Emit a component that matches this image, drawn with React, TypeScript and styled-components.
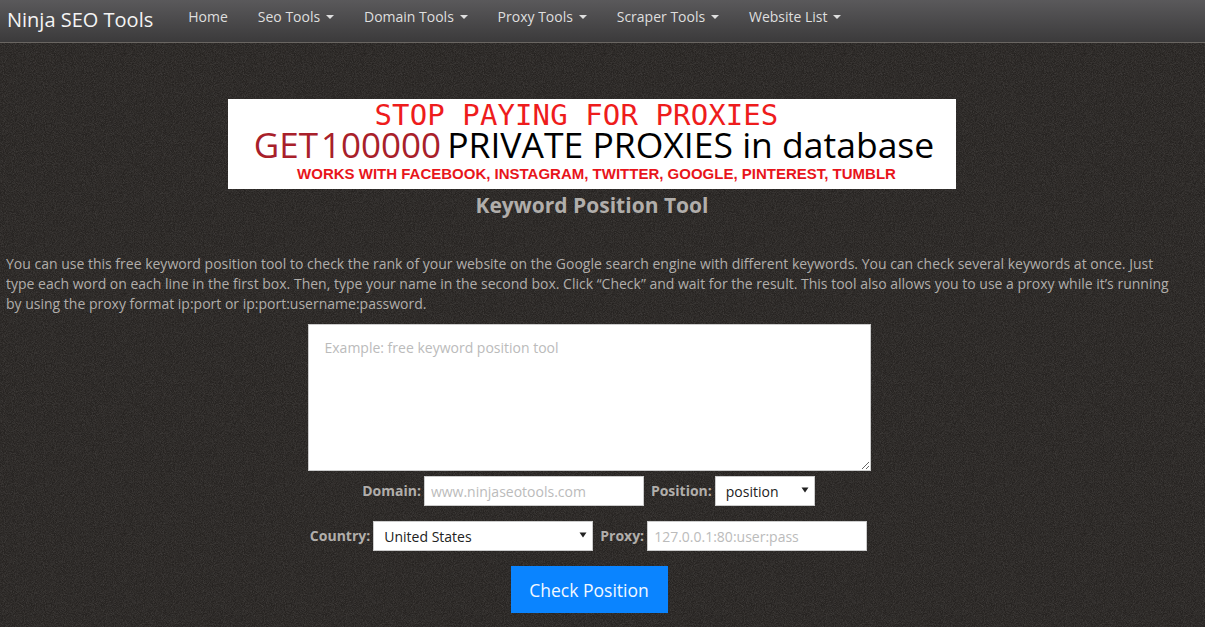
import React from 'react';
import styled, { createGlobalStyle } from 'styled-components';

const noise = `url("data:image/svg+xml,%3Csvg xmlns='http://www.w3.org/2000/svg' width='240' height='240'%3E%3Cfilter id='n'%3E%3CfeTurbulence type='fractalNoise' baseFrequency='1.1' numOctaves='2' stitchTiles='stitch'/%3E%3CfeColorMatrix values='0 0 0 0 0.5 0 0 0 0 0.48 0 0 0 0 0.46 0 0 0 0.3 -0.09'/%3E%3C/filter%3E%3Crect width='240' height='240' filter='url(%23n)'/%3E%3C/svg%3E")`;

const arrow = `url("data:image/svg+xml,%3Csvg xmlns='http://www.w3.org/2000/svg' width='8' height='6'%3E%3Cpath d='M0.5 0.5h7L4 5.5z' fill='%23222'/%3E%3C/svg%3E")`;

const GlobalStyle = createGlobalStyle`
  html, body {
    margin: 0;
    padding: 0;
    height: 100%;
    overflow: hidden;
  }
  body {
    font-family: "Open Sans", "Liberation Sans", sans-serif;
    font-size: 14px;
    line-height: 20px;
    color: #b4b1ae;
    background-color: #262321;
    background-image: ${noise};
  }
  * { box-sizing: border-box; }
`;

const NavBar = styled.nav`
  display: flex;
  align-items: center;
  height: 43px;
  background: linear-gradient(to bottom, #5a595b 0%, #3b3a3b 100%);
  border-bottom: 1px solid #6a6662;
`;

const Brand = styled.a`
  font-size: 20px;
  color: #f4f4f4;
  margin-left: 7px;
  margin-right: 20px;
  position: relative;
  top: -1px;
  white-space: nowrap;
`;

const NavItem = styled.a`
  display: flex;
  align-items: center;
  gap: 5.8px;
  padding: 0 15px;
  font-size: 14px;
  color: #dfdfdf;
  position: relative;
  top: -4px;
  white-space: nowrap;
`;

const Caret = styled.span`
  display: inline-block;
  width: 0;
  height: 0;
  border-left: 4px solid transparent;
  border-right: 4px solid transparent;
  border-top: 4px solid #dfdfdf;
`;

const Page = styled.main`
  display: flex;
  flex-direction: column;
  align-items: center;
  width: 1184px;
  padding: 56px 6px 0;
`;

const Banner = styled.div`
  display: flex;
  flex-direction: column;
  align-items: center;
  flex-shrink: 0;
  width: 728px;
  height: 90px;
  padding-top: 3px;
  background: #fff;
`;

const BannerTop = styled.div`
  font-family: "DejaVu Sans Mono", "Liberation Mono", monospace;
  font-size: 29px;
  line-height: 27px;
  letter-spacing: 0.1px;
  color: #ee1c1c;
  white-space: nowrap;
  margin-right: 31px;
`;

const BannerMiddle = styled.div`
  display: flex;
  font-size: 35.5px;
  line-height: 31px;
  color: #000;
  white-space: nowrap;
  margin-left: 4px;
`;

const BannerRed = styled.span`
  color: #a8202a;
  font-size: 35px;
  margin-right: 6px;
  word-spacing: -6px;
`;

const BannerBottom = styled.div`
  font-family: "Liberation Sans", sans-serif;
  font-weight: 700;
  font-size: 15px;
  line-height: 20px;
  margin-top: 4px;
  margin-left: 9px;
  color: #e8151b;
  white-space: nowrap;
`;

const Title = styled.h1`
  margin: 0;
  font-size: 21px;
  line-height: 33px;
  font-weight: 700;
  color: #b1aeab;
`;

const Intro = styled.p`
  align-self: stretch;
  margin: 32px 0 0;
  font-size: 14px;
  line-height: 20px;
  color: #b1aeab;
`;

const KeywordBox = styled.textarea`
  display: block;
  width: 563px;
  height: 147px;
  margin-top: 10px;
  margin-right: 6px;
  padding: 13px 16px;
  border: 1px solid #ccc;
  background: #fff;
  font-family: inherit;
  font-size: 14px;
  line-height: 20px;
  outline: none;
  resize: both;
  &::placeholder { color: #bbb; opacity: 1; }
`;

const FormRow = styled.div<{ $top: number }>`
  display: flex;
  align-items: center;
  justify-content: center;
  gap: 3px;
  height: 30px;
  margin-top: ${(p) => p.$top}px;
  margin-right: 11px;
`;

const FieldLabel = styled.label`
  font-weight: 700;
  font-size: 14px;
  color: #b1aeab;
  margin-left: 4px;
`;

const TextField = styled.input<{ $width: number }>`
  width: ${(p) => p.$width}px;
  height: 30px;
  padding: 0 6px;
  border: 1px solid #ccc;
  border-radius: 0;
  background: #fff;
  font-family: inherit;
  font-size: 14px;
  outline: none;
  &::placeholder { color: #bbb; opacity: 1; }
`;

const SelectField = styled.select<{ $width: number }>`
  width: ${(p) => p.$width}px;
  height: 30px;
  padding: 0 10px;
  border: 1px solid #ccc;
  border-radius: 0;
  background: #fff ${arrow} no-repeat right 5px top 10px;
  appearance: none;
  font-family: inherit;
  font-size: 14px;
  color: #222;
  outline: none;
`;

const SubmitButton = styled.button`
  margin-top: 15px;
  margin-right: 6px;
  width: 157px;
  height: 47px;
  border: none;
  border-radius: 0;
  background: #0a84ff;
  color: #f2f8ff;
  font-family: inherit;
  font-size: 17.5px;
`;

const menu = ['Seo Tools', 'Domain Tools', 'Proxy Tools', 'Scraper Tools', 'Website List'];

const App: React.FC = () => (
  <>
    <GlobalStyle />
    <NavBar>
      <Brand>Ninja SEO Tools</Brand>
      <NavItem>Home</NavItem>
      {menu.map((label) => (
        <NavItem key={label}>
          {label}
          <Caret />
        </NavItem>
      ))}
    </NavBar>
    <Page>
      <Banner>
        <BannerTop>STOP PAYING FOR PROXIES</BannerTop>
        <BannerMiddle>
          <BannerRed>GET 100000</BannerRed>PRIVATE PROXIES in database
        </BannerMiddle>
        <BannerBottom>WORKS WITH FACEBOOK, INSTAGRAM, TWITTER, GOOGLE, PINTEREST, TUMBLR</BannerBottom>
      </Banner>
      <Title>Keyword Position Tool</Title>
      <Intro>
        You can use this free keyword position tool to check the rank of your website on the Google search engine with
        different keywords. You can check several keywords at once. Just type each word on each line in the first box.
        Then, type your name in the second box. Click “Check” and wait for the result. This tool also allows you to use
        a proxy while it’s running by using the proxy format ip:port or ip:port:username:password.
      </Intro>
      <KeywordBox placeholder="Example: free keyword position tool" />
      <FormRow $top={5}>
        <FieldLabel>Domain:</FieldLabel>
        <TextField $width={220} placeholder="www.ninjaseotools.com" />
        <FieldLabel>Position:</FieldLabel>
        <SelectField $width={100} defaultValue="position">
          <option value="position">position</option>
        </SelectField>
      </FormRow>
      <FormRow $top={15}>
        <FieldLabel>Country:</FieldLabel>
        <SelectField $width={220} defaultValue="us">
          <option value="us">United States</option>
        </SelectField>
        <FieldLabel>Proxy:</FieldLabel>
        <TextField $width={220} placeholder="127.0.0.1:80:user:pass" />
      </FormRow>
      <SubmitButton>Check Position</SubmitButton>
    </Page>
  </>
);

export default App;
